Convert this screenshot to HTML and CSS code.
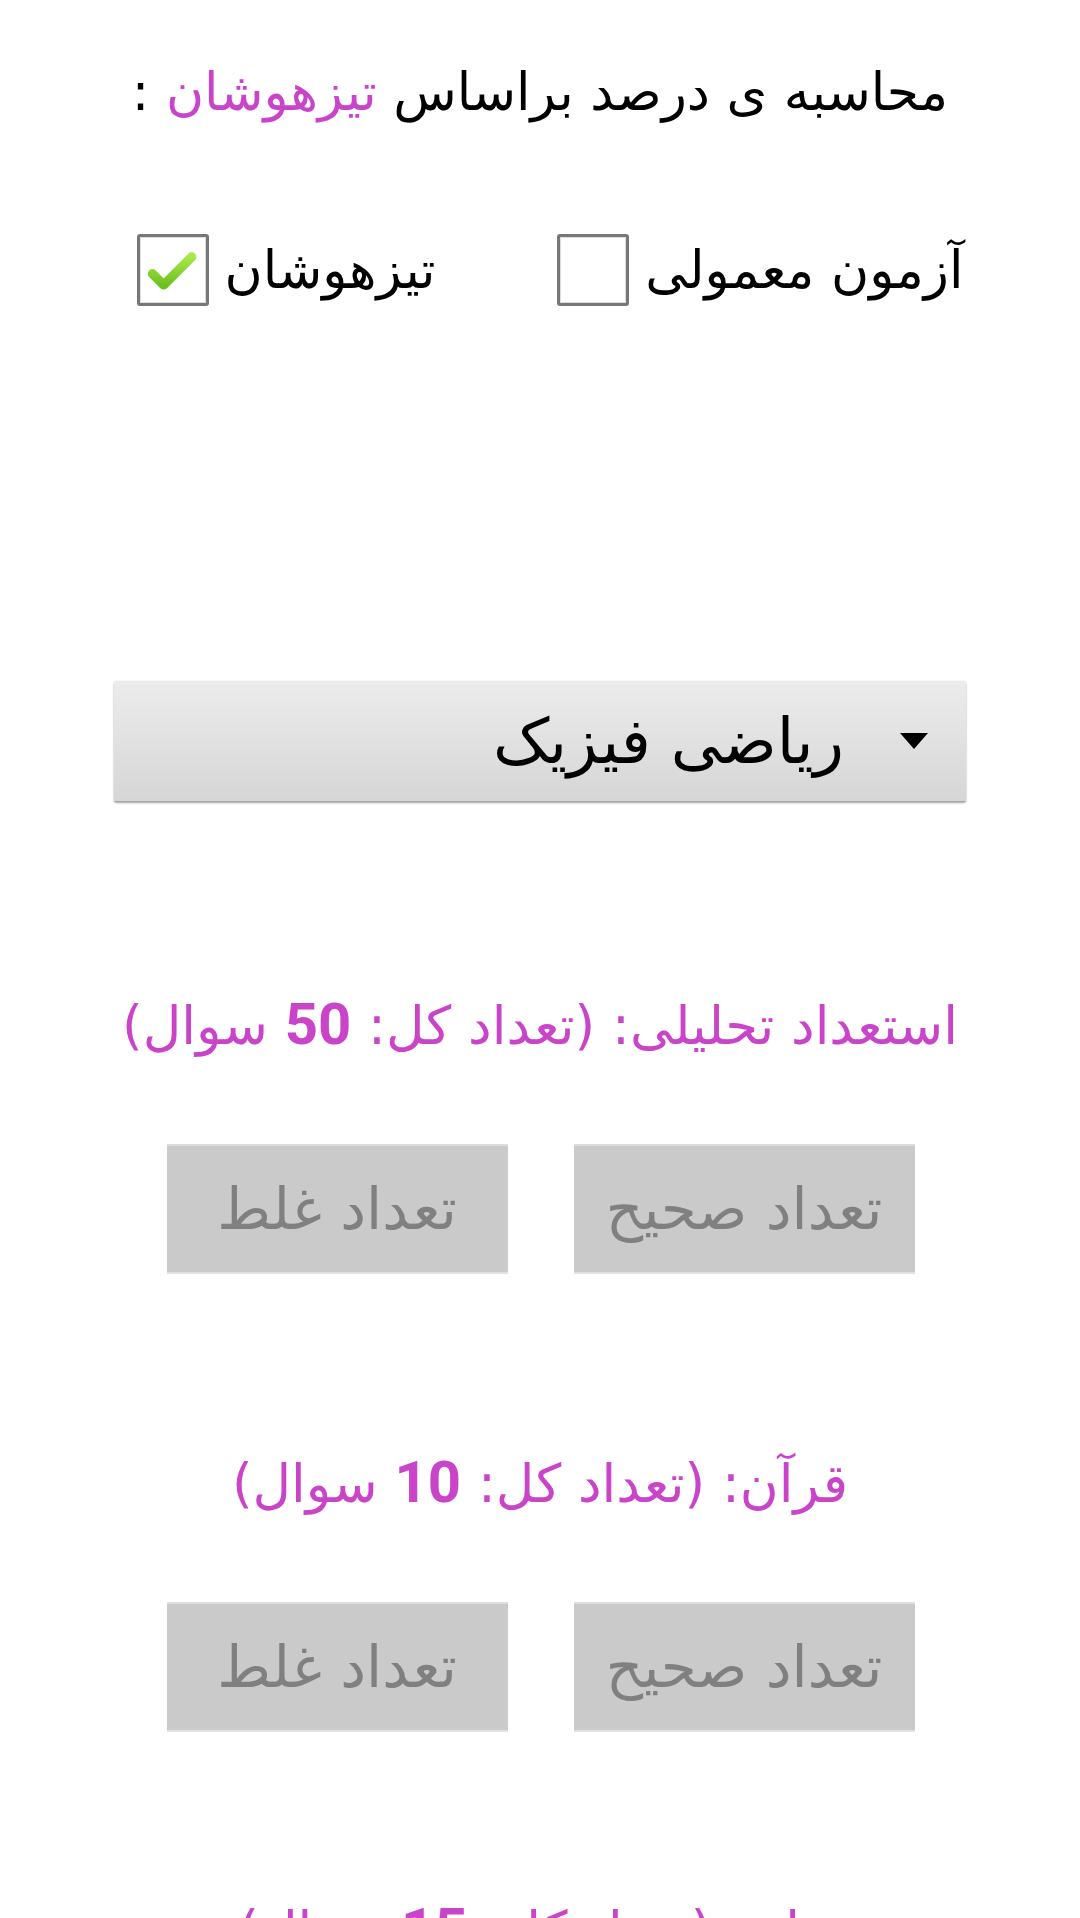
FILE: index.html
```html
<!DOCTYPE html>
<html lang="fa" dir="rtl">
<head>
<meta charset="utf-8">
<link rel="stylesheet" href="styles.css">
</head>
<body>
<div class="page">
  <h1 class="title">محاسبه ی درصد براساس <span class="accent">تیزهوشان</span> :</h1>

  <div class="checks">
    <label class="check">
      <span class="check-label">آزمون معمولی</span>
      <span class="box"></span>
    </label>
    <label class="check">
      <span class="check-label">تیزهوشان</span>
      <span class="box checked">
        <svg viewBox="0 0 60 60" width="56" height="56"><defs><linearGradient id="g" x1="0" y1="0" x2="0" y2="1"><stop offset="0" stop-color="#a8e84a"/><stop offset="1" stop-color="#6cc11e"/></linearGradient></defs><path d="M8 34 L20 46 L50 16" fill="none" stroke="url(#g)" stroke-width="10" stroke-linecap="round" stroke-linejoin="round"/></svg>
      </span>
    </label>
  </div>

  <div class="spinner">
    <span class="arrow"></span>
    <span class="spinner-text">ریاضی فیزیک</span>
  </div>

  <section class="subject first">
    <h2 class="subject-title">استعداد تحلیلی: (تعداد کل: <b class="num">50</b> سوال)</h2>
    <div class="inputs">
      <div class="field">تعداد صحیح</div>
      <div class="field">تعداد غلط</div>
    </div>
  </section>

  <section class="subject">
    <h2 class="subject-title">قرآن: (تعداد کل: <b class="num">10</b> سوال)</h2>
    <div class="inputs">
      <div class="field">تعداد صحیح</div>
      <div class="field">تعداد غلط</div>
    </div>
  </section>

  <section class="subject">
    <h2 class="subject-title">زبان: (تعداد کل: <b class="num">15</b> سوال)</h2>
  </section>
</div>
</body>
</html>
```
FILE: styles.css
```css
html, body {
  margin: 0;
  padding: 0;
  background: #ffffff;
  height: 1918px;
  overflow: hidden;
}
body {
  font-family: "DejaVu Sans", "Noto Sans", sans-serif;
  direction: rtl;
}
.page {
  width: 1080px;
}
.title {
  margin: 0;
  padding-top: 62px;
  height: 60px;
  line-height: 60px;
  font-size: 52px;
  font-weight: normal;
  text-align: center;
  color: #000;
}
.accent {
  color: #c944c9;
}
.checks {
  display: flex;
  justify-content: center;
  gap: 122px;
  margin-top: 112px;
  height: 72px;
  padding-left: 20px;
}
.check {
  display: flex;
  align-items: center;
  gap: 16px;
}
.check-label {
  font-size: 52px;
  color: #000;
}
.box {
  width: 66px;
  height: 66px;
  border: 3px solid #777;
  border-radius: 3px;
  background: #fff;
  display: flex;
  align-items: center;
  justify-content: center;
  box-shadow: inset 0 0 0 1px #ddd;
}
.spinner {
  margin: 375px auto 0;
  width: 852px;
  height: 120px;
  box-sizing: border-box;
  display: flex;
  align-items: center;
  padding-right: 38px;
  gap: 56px;
  background: linear-gradient(#ececec, #d6d6d6);
  border-radius: 2px;
  box-shadow: 0 2px 2px rgba(0,0,0,0.35), 0 0 1px rgba(0,0,0,0.25);
}
.arrow {
  width: 0;
  height: 0;
  border-left: 14px solid transparent;
  border-right: 14px solid transparent;
  border-top: 16px solid #000;
}
.spinner-text {
  font-size: 63px;
  color: #000;
}
.subject-title {
  margin: 0;
  height: 70px;
  line-height: 70px;
  font-size: 53px;
  font-weight: normal;
  text-align: center;
  color: #c944c9;
  white-space: nowrap;
}
.num {
  font-family: Roboto, "Liberation Sans", sans-serif;
  font-weight: bold;
  font-size: 58px;
}
.subject .subject-title {
  margin-top: 173px;
}
.subject.first .subject-title {
  margin-top: 188px;
}
.subject:last-child .subject-title {
  margin-top: 162px;
}
.inputs {
  display: flex;
  justify-content: center;
  gap: 66px;
  margin-top: 85px;
  padding-left: 1px;
}
.field {
  width: 341px;
  height: 130px;
  background: #cacaca;
  border-top: 2px solid #dddddd;
  border-bottom: 2px solid #e2e2e2;
  box-sizing: border-box;
  display: flex;
  align-items: center;
  justify-content: center;
  font-size: 58px;
  color: #808080;
}
```
